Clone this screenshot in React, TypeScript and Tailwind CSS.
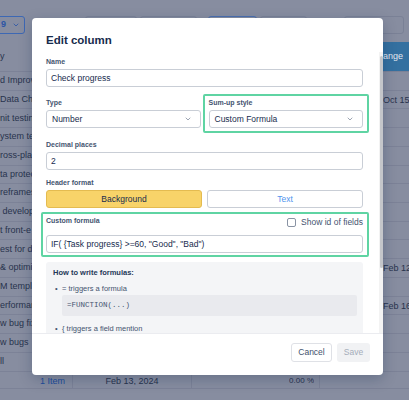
import React from "react";
import { ChevronDown } from "lucide-react";

const FONT = { fontFamily: '"Liberation Sans", Arial, sans-serif' };

const leftRows = [
  "d Improv",
  "Data Cha",
  "nit testin",
  "ystem te",
  "ross-pla",
  "ta protec",
  "reframes",
  " develop",
  "t front-e",
  "est for d",
  "& optimiz",
  "M templa",
  "erforman",
  "w bug fix",
  "w bugs",
  "ll",
];

const rightRows: Record<number, string> = { 1: "Oct 15,", 10: "Feb 12", 12: "Feb 16" };

function Field({ label, children }: { label: string; children: React.ReactNode }) {
  return (
    <div className="flex flex-col">
      <div className="h-[10px] leading-[10px] text-[7px] font-bold text-[#44546f] mb-[2px]">{label}</div>
      {children}
    </div>
  );
}

function Input({ value }: { value: string }) {
  return (
    <div className="h-[18px] border border-[#c9ced6] rounded-[3px] bg-white flex items-center px-[4px] text-[8.5px] text-[#172b4d] whitespace-nowrap overflow-hidden">
      {value}
    </div>
  );
}

function Select({ value }: { value: string }) {
  return (
    <div className="h-[18px] border border-[#c9ced6] rounded-[3px] bg-white flex items-center justify-between pl-[5px] pr-[8px] text-[8.5px] text-[#172b4d]">
      <span>{value}</span>
      <ChevronDown size={8} strokeWidth={2} className="text-[#6b778c]" />
    </div>
  );
}

export default function App() {
  return (
    <div className="relative w-[409px] h-[400px] overflow-hidden bg-[#878da0] text-[#28334d]" style={FONT}>
      {/* Background page (under overlay) */}
      <div className="flex flex-col">
        <div className="h-[42px] flex items-start pt-[16px] gap-[3px]">
          <div className="-ml-[3px] h-[18px] w-[28px] border border-[#3d68b4] rounded-[3px] flex items-center gap-[6px] px-[3px] text-[9px] font-bold text-[#2c56a6]">
            <span>9</span>
            <ChevronDown size={8} strokeWidth={2.5} />
          </div>
          <div className="ml-[57px] h-[18px] w-[52px] border border-[#7a8196] rounded-[3px]" />
          <div className="h-[18px] w-[57px] border border-[#7a8196] rounded-[3px]" />
          <div className="ml-[8px] h-[18px] w-[49px] border border-[#4a6fb0] rounded-[3px]" />
          <div className="h-[18px] w-[47px] border border-[#7a8196] rounded-[3px]" />
          <div className="ml-[34px] h-[18px] w-[60px] border border-[#7a8196] rounded-[3px]" />
        </div>
        <div className="h-[30px] flex border-b border-[#7c8297]">
          <div className="w-[120px] flex items-center text-[9px]">y</div>
          <div className="flex-1" />
          <div className="w-[26px] bg-[#3470a0] flex items-center text-[9px] text-[#e3e8f0] overflow-hidden whitespace-nowrap">ange</div>
        </div>
        {leftRows.map((t, i) => (
          <div key={i} className="h-[18.73px] flex border-b border-[#7c8297]">
            <div className="w-[120px] flex items-center text-[9px] whitespace-pre">{t}</div>
            <div className="flex-1" />
            <div className="w-[26px] flex items-center pt-[2px] text-[9px] whitespace-nowrap overflow-hidden">
              {rightRows[i] ?? ""}
            </div>
          </div>
        ))}
        <div className="h-[17px] flex border-b border-[#7c8297] text-[9px]">
          <div className="w-[73px] border-r border-[#7c8297] flex justify-end pr-[7px]">
            <div className="h-[13px] overflow-hidden leading-[18px] text-[#214c9a]">1 Item</div>
          </div>
          <div className="w-[119px] border-r border-[#7c8297] flex justify-center">
            <div className="h-[13px] overflow-hidden leading-[18px]">Feb 13, 2024</div>
          </div>
          <div className="w-[128px] border-r border-[#7c8297] flex justify-end pr-[5px]">
            <div className="h-[13px] overflow-hidden leading-[18px] text-[8px]">0.00 %</div>
          </div>
          <div className="flex-1" />
        </div>
      </div>

      {/* Modal */}
      <div className="absolute left-[32px] top-[18px] w-[351px] h-[357px] bg-white rounded-[4px] shadow-[0_4px_14px_rgba(9,30,66,0.25)] flex flex-col overflow-hidden">
        <div className="h-[34px] shrink-0 pl-[14px] pt-[15px] text-[11.5px] leading-[14px] font-bold text-[#172b4d]">
          Edit column
        </div>
        <div className="flex flex-1 min-h-0">
          <div className="flex-1 min-w-0 pl-[14px] pr-[16px] pt-[5px] overflow-hidden">
            <Field label="Name">
              <Input value="Check progress" />
            </Field>
            <div className="grid grid-cols-2 gap-x-[8px] mt-[11px]">
              <Field label="Type">
                <Select value="Number" />
              </Field>
              <div className="-mx-[6px] -mt-[4px] -mb-[5px] px-[4px] pt-[2px] pb-[3px] border-2 border-[#5fd4a3] rounded-[2px]">
                <Field label="Sum-up style">
                  <Select value="Custom Formula" />
                </Field>
              </div>
            </div>
            <div className="mt-[12px]">
              <Field label="Decimal places">
                <Input value="2" />
              </Field>
            </div>
            <div className="mt-[8px]">
              <Field label="Header format">
                <div className="grid grid-cols-2 gap-x-[5px]">
                  <div className="h-[18px] rounded-[3px] bg-[#f8d369] border border-[#e4bb50] flex items-center justify-center text-[8.5px] text-[#172b4d]">
                    Background
                  </div>
                  <div className="h-[18px] rounded-[3px] bg-white border border-[#c9ced6] flex items-center justify-center text-[8.5px] text-[#4f94ee]">
                    Text
                  </div>
                </div>
              </Field>
            </div>
            <div className="mt-[4px] -ml-[5px] -mr-[6px] pl-[3px] pr-[4px] pt-[1px] pb-[2px] border-2 border-[#5fd4a3] rounded-[2px]">
              <div className="h-[14px] flex items-center justify-between mb-[6px]">
                <span className="text-[7px] font-bold text-[#44546f] -mt-[2px]">Custom formula</span>
                <label className="flex items-center gap-[5px] text-[8.5px] text-[#44546f]">
                  <span className="w-[9px] h-[9px] border border-[#8993a4] rounded-[2px] bg-white" />
                  Show id of fields
                </label>
              </div>
              <Input value={'IF( {Task progress} >=60, "Good", "Bad")'} />
            </div>
            <div className="mt-[5px] bg-[#f4f5f7] rounded-[3px] pl-[7px] pr-[7px] pt-[6px] pb-[10px]">
              <div className="h-[10px] leading-[10px] text-[7.5px] font-bold text-[#253858]">How to write formulas:</div>
              <div className="mt-[6px] flex items-center text-[7.5px] text-[#44546f] leading-[10px]">
                <span className="w-[9px] pl-[2px]">•</span>
                <span>= triggers a formula</span>
              </div>
              <div className="ml-[9px] mr-[-1px] mt-[1px] h-[21px] bg-[#e9eaee] rounded-[2px] flex items-center pl-[5px] text-[7.5px] text-[#44546f]" style={{ fontFamily: '"Liberation Mono", "DejaVu Sans Mono", monospace' }}>
                =FUNCTION(...)
              </div>
              <div className="mt-[8px] flex items-center text-[7.5px] text-[#44546f] leading-[10px]">
                <span className="w-[9px] pl-[2px]">•</span>
                <span>{"{ triggers a field mention"}</span>
              </div>
            </div>
          </div>
          <div className="w-[4px] shrink-0 bg-[#f3f3f3] flex flex-col pt-[4px]">
            <div className="mx-auto w-[3px] h-[212px] rounded-full bg-[#c4c6ca]" />
          </div>
        </div>
        <div className="h-[42px] shrink-0 border-t border-[#ebecf0] flex items-start justify-end gap-[5px] pt-[9px] pr-[13px]">
          <div className="h-[19px] w-[41px] border border-[#dfe1e6] rounded-[3px] bg-white flex items-center justify-center text-[8.5px] text-[#42526e]">
            Cancel
          </div>
          <div className="h-[19px] w-[33px] rounded-[3px] bg-[#f1f2f4] flex items-center justify-center text-[8.5px] text-[#a5adba]">
            Save
          </div>
        </div>
      </div>
    </div>
  );
}
